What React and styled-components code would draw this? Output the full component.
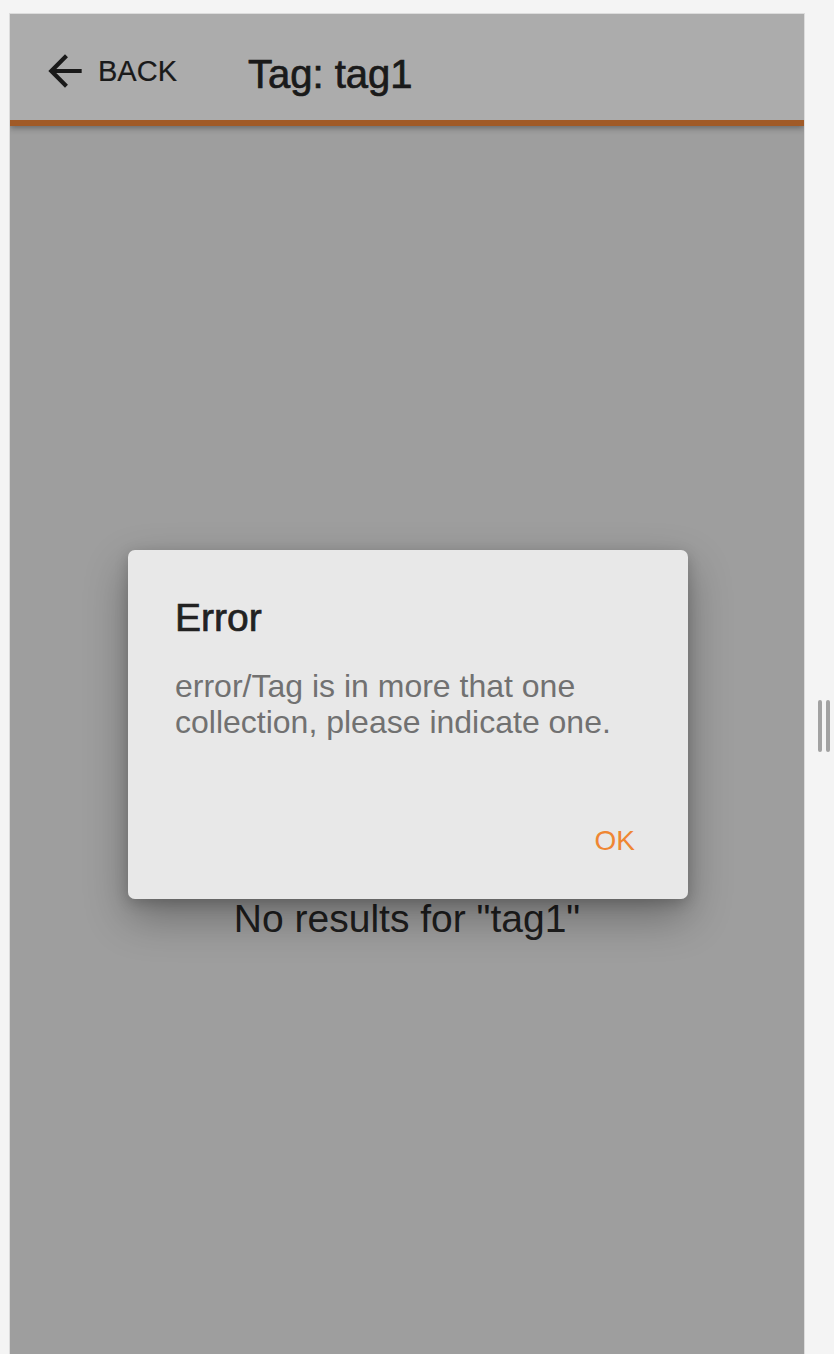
import React from "react";
import styled, { createGlobalStyle } from "styled-components";

const GlobalStyle = createGlobalStyle`
  html, body {
    margin: 0;
    padding: 0;
    height: 100%;
    overflow: hidden;
    background: #f4f4f4;
    font-family: "Liberation Sans", Arial, sans-serif;
  }
  #root {
    height: 100%;
  }
`;

const Page = styled.div`
  display: flex;
  height: 100%;
  padding: 13px 0 0 9px;
  box-sizing: border-box;
`;

const Frame = styled.div`
  position: relative;
  display: flex;
  flex-direction: column;
  width: 796px;
  height: 100%;
  box-sizing: border-box;
  border: 1px solid #dcdcdc;
  border-bottom: none;
  background: #e2e2e2;
  overflow: hidden;
`;

const Header = styled.header`
  position: relative;
  z-index: 1;
  display: flex;
  align-items: center;
  height: 112px;
  box-sizing: border-box;
  padding: 8px 0 0 30px;
  background: #f6f6f6;
  border-bottom: 6px solid #e68139;
  box-shadow: 0 2px 6px rgba(0, 0, 0, 0.35);
`;

const BackButton = styled.button`
  display: flex;
  align-items: center;
  gap: 8px;
  padding: 0;
  border: none;
  background: none;
  font-family: inherit;
  font-size: 29px;
  color: #262626;
  -webkit-text-stroke: 0.2px #262626;
  cursor: pointer;
`;

const Title = styled.h1`
  margin: 6px 0 0 71px;
  font-size: 40px;
  font-weight: 400;
  color: #262626;
  -webkit-text-stroke: 0.7px #262626;
`;

const Content = styled.main`
  flex: 1;
  display: flex;
  flex-direction: column;
  align-items: center;
  padding-top: 452px;
`;

const EmptyIcon = styled.svg`
  width: 212px;
  height: 242px;
  margin-left: -26px;
`;

const EmptyText = styled.p`
  margin: 77px 0 0;
  font-size: 39px;
  line-height: 44px;
  color: #2b2b2b;
`;

const Backdrop = styled.div`
  position: absolute;
  inset: 0;
  z-index: 2;
  display: flex;
  justify-content: center;
  align-items: flex-start;
  padding: 536px 0 0 2px;
  background: rgba(0, 0, 0, 0.3);
`;

const Dialog = styled.div`
  display: flex;
  flex-direction: column;
  width: 560px;
  height: 349px;
  box-sizing: border-box;
  padding: 45px 48px 0 47px;
  border-radius: 7px;
  background: rgba(240, 240, 240, 0.9);
  box-shadow: 0 18px 44px rgba(0, 0, 0, 0.32), 0 4px 14px rgba(0, 0, 0, 0.18);
`;

const DialogTitle = styled.h2`
  margin: 0;
  font-size: 39px;
  line-height: 46px;
  font-weight: 400;
  color: #222222;
  -webkit-text-stroke: 0.7px #222222;
`;

const DialogMessage = styled.p`
  margin: 27px 0 0;
  font-size: 32px;
  line-height: 36px;
  color: #717171;
`;

const Actions = styled.div`
  display: flex;
  justify-content: flex-end;
  margin-top: 85px;
  margin-right: 5px;
`;

const OkButton = styled.button`
  padding: 0;
  border: none;
  background: none;
  font-family: inherit;
  font-size: 28px;
  line-height: 32px;
  color: #ef8633;
  cursor: pointer;
`;

const Gutter = styled.div`
  display: flex;
  gap: 4px;
  padding: 687px 0 0 13px;
`;

const Grip = styled.span`
  width: 4px;
  height: 52px;
  border-radius: 2px;
  background: #a2a2a2;
`;

const ArrowBack = () => (
  <svg width="50" height="50" viewBox="0 0 24 24" fill="#262626">
    <path d="M20 11H7.83l5.59-5.59L12 4l-8 8 8 8 1.41-1.41L7.83 13H20v-2z" />
  </svg>
);

const App = () => {
  return (
    <>
      <GlobalStyle />
      <Page>
        <Frame>
          <Header>
            <BackButton>
              <ArrowBack />
              BACK
            </BackButton>
            <Title>Tag: tag1</Title>
          </Header>

          <Content>
            {/* faint empty-state shield, only seen through the dialog */}
            <EmptyIcon viewBox="0 0 212 242">
              <path
                d="M106 2 L208 40 V120 C208 180 164 222 106 240 C48 222 4 180 4 120 V40 Z"
                fill="#ececec"
              />
              <circle cx="52" cy="55" r="25" fill="#f0f0f0" />
            </EmptyIcon>
            <EmptyText>No results for "tag1"</EmptyText>
          </Content>

          <Backdrop>
            <Dialog>
              <DialogTitle>Error</DialogTitle>
              <DialogMessage>
                error/Tag is in more that one collection, please indicate one.
              </DialogMessage>
              <Actions>
                <OkButton>OK</OkButton>
              </Actions>
            </Dialog>
          </Backdrop>
        </Frame>
        <Gutter>
          <Grip />
          <Grip />
        </Gutter>
      </Page>
    </>
  );
};

export default App;
